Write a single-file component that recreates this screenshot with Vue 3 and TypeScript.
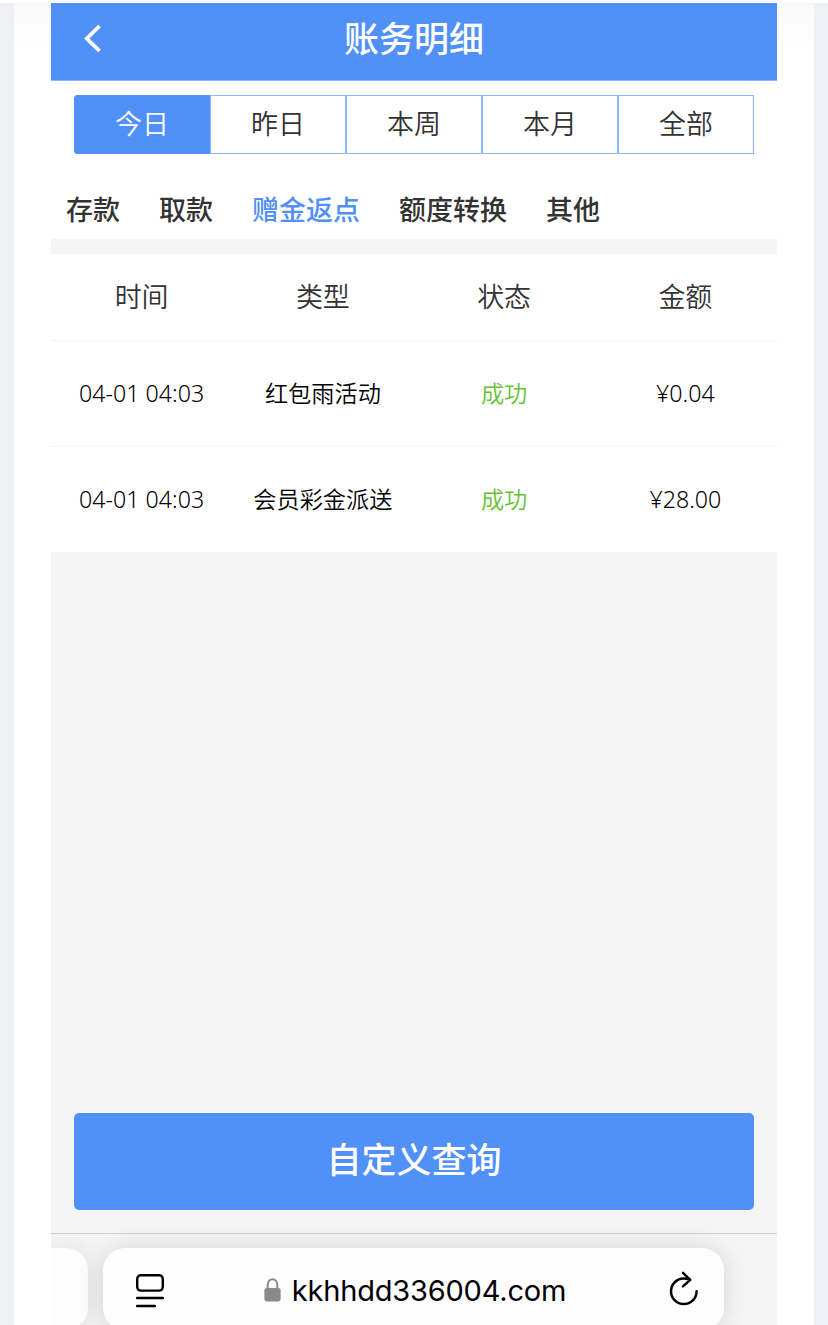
<script setup lang="ts">
import { ref } from 'vue'

interface LedgerRecord {
  id: number
  time: string
  kind: string
  status: string
  amount: string
}

const periods: string[] = ['今日', '昨日', '本周', '本月', '全部']
const categories: string[] = ['存款', '取款', '赠金返点', '额度转换', '其他']
const columns: string[] = ['时间', '类型', '状态', '金额']

const activePeriod = ref(0)
const activeCategory = ref(2)

const records: LedgerRecord[] = [
  { id: 1, time: '04-01 04:03', kind: '红包雨活动', status: '成功', amount: '¥0.04' },
  { id: 2, time: '04-01 04:03', kind: '会员彩金派送', status: '成功', amount: '¥28.00' },
]
</script>

<template>
  <div class="page">
    <div class="frame">
      <main class="phone">
        <header class="header">
          <svg class="back" viewBox="0 0 20 30" width="20" height="30">
            <path d="M17.5 2 L4.8 14.5 L17.5 27" fill="none" stroke="#fff" stroke-width="3.8" />
          </svg>
          <h1 class="title">账务明细</h1>
        </header>

        <section class="filters">
          <div class="periods">
            <button
              v-for="(p, i) in periods"
              :key="p"
              class="period"
              :class="{ active: i === activePeriod }"
              @click="activePeriod = i"
            >{{ p }}</button>
          </div>
          <nav class="categories">
            <a
              v-for="(c, i) in categories"
              :key="c"
              class="category"
              :class="{ active: i === activeCategory }"
              @click="activeCategory = i"
            >{{ c }}</a>
          </nav>
        </section>

        <section class="table">
          <div class="row head">
            <span v-for="c in columns" :key="c">{{ c }}</span>
          </div>
          <div v-for="r in records" :key="r.id" class="row">
            <span class="time">{{ r.time }}</span>
            <span>{{ r.kind }}</span>
            <span class="status">{{ r.status }}</span>
            <span class="amount">{{ r.amount }}</span>
          </div>
        </section>

        <div class="action">
          <button class="query">自定义查询</button>
        </div>

        <footer class="browser">
          <div class="previous"></div>
          <div class="address">
            <svg class="reader" viewBox="0 0 30 36" width="30" height="36" fill="none" stroke="#000" stroke-width="2.4" stroke-linecap="round">
              <rect x="2.2" y="2.2" width="25.6" height="15.4" rx="3.6" />
              <path d="M2.1 25 H27.8 M2.1 33 H19.8" />
            </svg>
            <div class="domain">
              <svg viewBox="0 0 17 24" width="17" height="24">
                <path d="M3.7 11 V7.2 C3.7 -0.8 13.3 -0.8 13.3 7.2 V11" fill="none" stroke="#8a898e" stroke-width="2" />
                <rect x="0.4" y="10" width="16.2" height="13.4" rx="2.3" fill="#8a898e" />
              </svg>
              <span>kkhhdd336004.com</span>
            </div>
            <svg class="reload" viewBox="0 0 30 36" width="30" height="36" fill="none" stroke="#000" stroke-width="2.5" stroke-linecap="round" stroke-linejoin="round">
              <path d="M27.6 20.3 A12.8 12.8 0 1 1 14.8 7.5 C17.2 7.5 19.2 8 21 8.7" />
              <path d="M14 1.9 L21.2 8.8 L14 15.4" />
            </svg>
          </div>
        </footer>
      </main>
    </div>
  </div>
</template>

<style>
body {
  margin: 0;
  background: #fff;
}
</style>

<style scoped>
.page {
  box-sizing: border-box;
  width: 828px;
  height: 1325px;
  padding-top: 3px;
  overflow: hidden;
  background: #fff;
  font-family: "Noto Sans CJK SC", sans-serif;
  color: #333;
}
.frame {
  box-sizing: border-box;
  height: 1322px;
  padding: 0 37px;
  border: solid #eef0f5;
  border-width: 0 14px;
  background: linear-gradient(#f9f9f9, #fff 45px);
}
.phone {
  display: flex;
  flex-direction: column;
  width: 726px;
  height: 1322px;
  overflow: hidden;
  background: #f5f5f5;
}
button {
  margin: 0;
  padding: 0;
  border: 0;
  font: inherit;
}
.header {
  display: grid;
  grid-template-columns: 80px 1fr 80px;
  align-items: center;
  box-sizing: border-box;
  height: 78px;
  flex: none;
  padding-bottom: 6px;
  border-bottom: 1px solid #8cb7f9;
  background: #5090f7;
  color: #fff;
}
.back {
  margin-left: 31px;
}
.title {
  margin: 0;
  padding-bottom: 4px;
  font-size: 35px;
  font-weight: 500;
  line-height: 50px;
  text-align: center;
}
.filters {
  flex: none;
  height: 158px;
  background: #fff;
}
.periods {
  display: flex;
  margin: 0 23px;
  padding-top: 14px;
}
.period {
  box-sizing: border-box;
  width: 136px;
  height: 59px;
  padding-bottom: 4px;
  border: 1px solid #8db7f8;
  background: #fff;
  color: #333;
  font-size: 27px;
  font-weight: 350;
}
.period:first-child {
  border-radius: 3px 0 0 3px;
}
.period.active {
  border-color: #5090f7;
  background: #5090f7;
  color: #fff;
}
.categories {
  display: flex;
  gap: 39px;
  padding: 35px 15px 0;
  font-size: 27px;
  font-weight: 500;
  line-height: 40px;
}
.category.active {
  color: #5090f7;
}
.table {
  flex: none;
  margin-top: 15px;
  background: #fff;
}
.row {
  display: grid;
  grid-template-columns: repeat(4, 1fr);
  align-items: center;
  box-sizing: border-box;
  height: 106px;
  padding: 0 1px 3px 0;
  border-top: 1px solid #f3f3f3;
  color: #000;
  font-size: 23.2px;
  font-weight: 350;
  text-align: center;
}
.row.head {
  height: 86px;
  padding-bottom: 3px;
  border-top: 0;
  color: #333;
  font-size: 27px;
}
.time,
.amount {
  padding-top: 2px;
  font-family: "Noto Sans", "Noto Sans CJK SC", sans-serif;
  font-weight: 350;
}
.row .status {
  color: #67c132;
}
.action {
  flex: none;
  margin: auto 23px 23px;
}
.query {
  display: block;
  width: 100%;
  height: 97px;
  padding-bottom: 9px;
  border-radius: 5px;
  background: #5090f7;
  color: #fff;
  font-size: 35px;
  font-weight: 500;
}
.browser {
  display: flex;
  gap: 15px;
  flex: none;
  box-sizing: border-box;
  height: 92px;
  padding-top: 14px;
  border-top: 1px solid #cfcfcf;
  background: #f5f5f5;
}
.previous {
  width: 37px;
  height: 82px;
  border-radius: 0 22px 22px 0;
  background: #fdfdfd;
  box-shadow: 0 0 26px rgba(0, 0, 0, 0.1);
}
.address {
  display: grid;
  grid-template-columns: 100px 1fr 100px;
  width: 621px;
  height: 82px;
  border-radius: 22px;
  background: #fdfdfd;
  box-shadow: 0 0 26px rgba(0, 0, 0, 0.13);
}
.reader {
  margin: 25px 0 0 32px;
}
.domain {
  display: flex;
  align-items: center;
  justify-content: center;
  gap: 11px;
  height: 84px;
  padding-left: 3px;
  color: #000;
  font-family: Inter, sans-serif;
  font-size: 29px;
  letter-spacing: -0.2px;
}
.reload {
  margin: 23px 0 0 45px;
}
</style>
